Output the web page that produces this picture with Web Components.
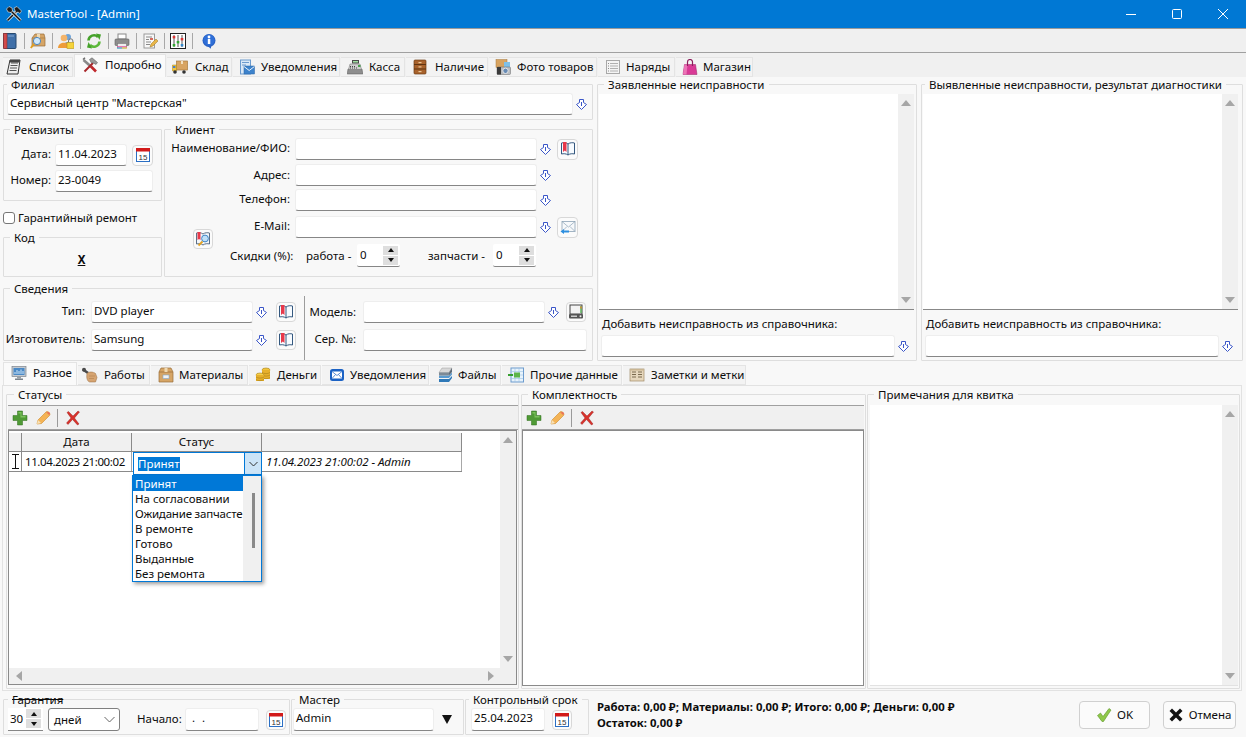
<!DOCTYPE html>
<html lang="ru"><head><meta charset="utf-8"><title>MasterTool</title>
<style>
html,body{margin:0;padding:0;background:#f8f8f8;overflow:hidden}
body{font:11.5px/14px "Noto Sans","Open Sans",sans-serif;color:#0c0c0c;width:1246px;height:737px}
</style></head><body>
<master-window></master-window>
<script>
const def=(tag,html,init)=>{const t=document.createElement('template');t.innerHTML=html;
customElements.define(tag,class extends HTMLElement{constructor(){super();this.attachShadow({mode:'open'}).append(t.content.cloneNode(true));}
connectedCallback(){init&&init(this,this.shadowRoot)}})};

const I={
appicon:'<path d="M1.500 14.500 11 5" stroke="#f4f4f4" stroke-width="3"/><path d="M1.500 14.500 11 5" stroke="#111" stroke-width="1.600"/><path d="M8 2l3-1.500 4.500 4.500-1.500 2.500-2-1.500-2 1z" fill="#1c1c1c" stroke="#eee" stroke-width=".6"/><path d="M14.500 14.500 5 5" stroke="#f4f4f4" stroke-width="3"/><path d="M14.500 14.500 5 5" stroke="#111" stroke-width="1.600"/><path d="M.5 3l2.500-2.500 3 1.500.5 3-1.500 1.500-3-.5z" fill="#1c1c1c" stroke="#eee" stroke-width=".6"/>',
book:'<rect x="1.500" y="0.500" width="12.500" height="15" rx="1" fill="#3f6fa8" stroke="#27496f"/><rect x="1.500" y="0.500" width="3.500" height="15" fill="#d24a4a" stroke="#8c2c2c" stroke-width=".6"/><path d="M6 3h6" stroke="#86a9d0"/>',
boxsearch:'<path d="M2 5 5 1h9l1 4v8H2z" fill="#d6a566" stroke="#9a6f3b" stroke-width=".7"/><path d="M8 1v4M2 5h13" stroke="#a87b44" stroke-width=".7"/><rect x="7" y="1" width="3" height="4" fill="#efd9b2"/><circle cx="7" cy="8" r="3.600" fill="#cfe8fb" stroke="#4a86c0"/><path d="M4 11 .8 15" stroke="#e0a020" stroke-width="2"/>',
users:'<circle cx="10" cy="4" r="3" fill="#6ea3d8"/><path d="M5 13c0-5 10-5 10 0z" fill="#4a7fb8"/><circle cx="6" cy="5" r="3.300" fill="#f5b56a"/><path d="M0 15c0-7 12-7 12 0z" fill="#ee9c3a"/><path d="M10.500 9.500V8a2.200 2.200 0 0 1 4.400 0v1.500" fill="none" stroke="#777"/><rect x="9" y="9.500" width="7" height="6" fill="#f5d33a" stroke="#b8931a" stroke-width=".6"/>',
refresh:'<path d="M2.500 7.500A5.500 5.500 0 0 1 12 4" fill="none" stroke="#45a22a" stroke-width="2.600"/><path d="M10 0.500l5 1-1.500 5.500z" fill="#45a22a"/><path d="M13.500 8.500A5.500 5.500 0 0 1 4 12" fill="none" stroke="#5cb83a" stroke-width="2.600"/><path d="M6 15.500l-5-1 1.500-5.500z" fill="#45a22a"/>',
printer:'<rect x="4" y="1" width="8" height="5" fill="#fff" stroke="#888"/><rect x="1" y="6" width="14" height="6.500" rx="1" fill="#8d8d8d" stroke="#5e5e5e" stroke-width=".6"/><rect x="3.500" y="10.500" width="9" height="4.500" fill="#eee" stroke="#777" stroke-width=".6"/><path d="M3 13.800h10" stroke="#e04b9c"/><path d="M3 15h5" stroke="#3aa6d8"/><path d="M8 15h5" stroke="#e2c93c"/>',
docpen:'<rect x="2" y="1" width="10.500" height="14" fill="#f8f8f8" stroke="#9a9a9a"/><path d="M4 4h6M4 6.500h3M4 9h5M4 11.500h4" stroke="#888"/><rect x="8" y="5" width="3" height="2" fill="#d86a5e"/><path d="M8 14l1-3 5-5 2 2-5 5z" fill="#e8b648" stroke="#9c7420" stroke-width=".5"/>',
eq:'<rect x=".5" y=".5" width="15" height="15" fill="#fff" stroke="#222"/><path d="M4 2v12M8 2v12M12 2v12" stroke="#555"/><rect x="2.700" y="3" width="2.600" height="2.400" fill="#d33"/><rect x="6.700" y="8" width="2.600" height="2.400" fill="#3a3"/><rect x="10.700" y="5" width="2.600" height="2.400" fill="#d33"/><rect x="2.700" y="11" width="2.600" height="2.400" fill="#3a3"/><rect x="10.700" y="11" width="2.600" height="2.400" fill="#38c"/>',
info:'<path d="M5 12 10 15.800V12z" fill="#2a62c4"/><circle cx="8" cy="7.500" r="6.500" fill="#2a62c4"/><circle cx="8" cy="7" r="5.500" fill="#2f6fd8"/><rect x="6.800" y="6" width="2.500" height="5" fill="#fff"/><circle cx="8" cy="4" r="1.400" fill="#fff"/>',
notepad:'<path d="M4 1h10l-2 14H1z" fill="#eee" stroke="#333"/><path d="M5 4h7M4.500 6.500h7M4 9h7M3.500 11.500h7" stroke="#555"/><path d="M4 1h10l-.4 2.500H3.500z" fill="#444"/>',
hammer:'<path d="M1.500 3 9.500 10" stroke="#8a8a8a" stroke-width="2.600"/><path d="M1 2.500 3 .8" stroke="#666" stroke-width="1.500"/><path d="M9 9.500 14 14.500" stroke="#c0282c" stroke-width="2.600"/><path d="M2.500 14.500 11 6" stroke="#a8262a" stroke-width="2"/><path d="M7.500 2.500 10 .8l5.500 4.700-1.500 2-2.200-1.300-2.500-.4z" fill="#9a9a9a" stroke="#555" stroke-width=".5"/>',
truck:'<rect x="4.500" y="2" width="11" height="9" fill="#d8a461" stroke="#a77a3e" stroke-width=".7"/><path d="M10 2v3" stroke="#f2e0c0" stroke-width="2"/><path d="M.5 6h4v6h-4z" fill="#f3c53a" stroke="#a88418" stroke-width=".5"/><rect x="1" y="7" width="2.400" height="2" fill="#4a7ec2"/><circle cx="3" cy="13" r="1.800" fill="#333"/><circle cx="12" cy="13" r="1.800" fill="#333"/>',
maildoc:'<rect x="1.500" y="1" width="10" height="14" fill="#dbe9f7" stroke="#6c9bce"/><path d="M3 3.500h7M3 6h4" stroke="#6c9bce"/><rect x="5" y="7" width="10.500" height="8" fill="#3d83cc" stroke="#2a63a4" stroke-width=".5"/><path d="M5 7.500l5.200 4 5.200-4" fill="none" stroke="#fff" stroke-width=".9"/>',
register:'<path d="M1 10h14l.8 5H.2z" fill="#8e8e8e" stroke="#555" stroke-width=".5"/><path d="M3 5h10l1.500 5.500H1.500z" fill="#cfcfcf" stroke="#6e6e6e" stroke-width=".5"/><path d="M3 7.500h6M3 9h7" stroke="#444" stroke-dasharray="1 1"/><rect x="5" y="1" width="7" height="3.500" fill="#4a4a4a"/><rect x="6" y="2" width="5" height="1.500" fill="#9fe0a0"/><rect x="11" y="6" width="2.500" height="2" fill="#45a04a"/>',
drawer:'<rect x="2" y="1" width="12" height="14" rx="1" fill="#a8622c" stroke="#6e3c14" stroke-width=".7"/><path d="M2 5.500h12M2 10h12" stroke="#5f3410"/><rect x="6.500" y="3" width="3" height="1.200" fill="#e9c89a"/><rect x="6.500" y="7.300" width="3" height="1.200" fill="#e9c89a"/><rect x="6.500" y="12" width="3" height="1.200" fill="#e9c89a"/>',
photo:'<rect x="1" y="0.500" width="11" height="8" fill="#d8a461" stroke="#a77a3e" stroke-width=".5"/><rect x="9" y="3" width="6" height="5" fill="#7fc0e8"/><rect x="2" y="8" width="13.500" height="7.500" rx="1" fill="#b9bcc0" stroke="#666" stroke-width=".5"/><rect x="2" y="8" width="4" height="7.500" fill="#3b3b3b"/><circle cx="10.500" cy="11.800" r="2.700" fill="#678bb5" stroke="#e8e8e8"/>',
listgrey:'<rect x="1.500" y="1.500" width="13" height="13" fill="#f4f4f4" stroke="#a8a8a8"/><path d="M5 4.500h8M5 7h8M5 9.500h8M5 12h8" stroke="#b0b0b0"/><path d="M3 4.500h1M3 7h1M3 9.500h1M3 12h1" stroke="#8a8a8a"/>',
bag:'<path d="M2.500 5.500h11l1.500 10H1z" fill="#d93a96" stroke="#9a1f66" stroke-width=".5"/><path d="M2.500 5.500h3L4.500 15.500H1z" fill="#ec74b7"/><path d="M5.500 7V3a2.500 2.500 0 0 1 5 0v4" fill="none" stroke="#8c1e5c" stroke-width="1.200"/>',
monitor:'<rect x="1" y="1.500" width="14" height="10" fill="#c3c9d0" stroke="#7b838c" stroke-width=".7"/><rect x="2.500" y="3" width="11" height="7" fill="#4a89c6"/><path d="M4 9V7M6 9V5M8 9V6M10 9V4.500M12 9V6" stroke="#cfe6f8"/><rect x="6" y="11.500" width="4" height="2" fill="#9aa1a8"/><rect x="4" y="13.500" width="8" height="1.500" fill="#7b838c"/>',
wrenchhand:'<path d="M1 2.500 6 6" stroke="#4a4a4a" stroke-width="2.600"/><circle cx="2" cy="2.800" r="2" fill="#4a4a4a"/><path d="M5 6.500c2-2 6-2 8.500 0l1.500 4-1.500 4.500H8c-2 0-4-3-3-8.500z" fill="#d6a471" stroke="#976b3e" stroke-width=".5"/><path d="M7 9h6M7 11.500h5" stroke="#b3824e" stroke-width=".6"/>',
box:'<path d="M1 5 3 1h10l2 4v10H1z" fill="#d6a566" stroke="#9a6f3b" stroke-width=".7"/><path d="M1 5h14" stroke="#a87b44"/><rect x="6.500" y="1" width="3" height="4" fill="#efd9b2"/><rect x="5" y="8" width="6" height="3.500" fill="#f2f2f2" stroke="#7ea8d2" stroke-width=".6"/>',
coins:'<ellipse cx="11" cy="3" rx="4" ry="2" fill="#f3c53a" stroke="#a77f16" stroke-width=".6"/><rect x="7" y="3" width="8" height="9" fill="#e7b02c"/><path d="M7 5.500c2 1.500 6 1.500 8 0M7 8c2 1.500 6 1.500 8 0M7 10.500c2 1.500 6 1.500 8 0" fill="none" stroke="#a77f16" stroke-width=".6"/><ellipse cx="5" cy="8" rx="4" ry="2" fill="#f6d04a" stroke="#a77f16" stroke-width=".6"/><rect x="1" y="8" width="8" height="6" fill="#e7b02c"/><path d="M1 10c2 1.500 6 1.500 8 0M1 12.500c2 1.500 6 1.500 8 0" fill="none" stroke="#a77f16" stroke-width=".6"/>',
mailblue:'<rect x="1" y="2" width="14" height="12" rx="2.500" fill="#1b62c4"/><rect x="3" y="4.500" width="10" height="7" fill="#fff"/><path d="M3 4.500l5 4 5-4M3 11.500l3.500-4M13 11.500l-3.500-4" fill="none" stroke="#1b62c4" stroke-width=".7"/>',
files:'<path d="M2 12h10l3-3v2l-3 4H2z" fill="#2f79b8"/><path d="M2 8.500h10l3-3v2l-3 3.500H2z" fill="#5a9bd0"/><path d="M5 1h10l-3 4.500H2z" fill="#d8d8d8" stroke="#888" stroke-width=".4"/><path d="M2 5.500h10v3H2z" fill="#7d8a96"/><path d="M12 5.500l3-4.500v4l-3 3.500z" fill="#5d6a76"/>',
tablegreen:'<rect x="3" y="1" width="12.500" height="14" fill="#e8f3fb" stroke="#6c9bce"/><path d="M3 4.500h12M3 8h12M3 11.500h12M7 1v14M11 1v14" stroke="#9cc2e4" stroke-width=".6"/><rect x="6" y="5.500" width="6" height="5" fill="#5db54a"/><path d="M0 8h5" stroke="#36a030" stroke-width="2"/>',
notes:'<rect x="1" y="2" width="14" height="12" fill="#e6d7bd" stroke="#a08a66" stroke-width=".7"/><path d="M3 5h4M9 5h4M3 7.500h4M9 7.500h4M3 10h4M9 10h4" stroke="#7a6a4e"/><rect x="1" y="2" width="14" height="1.500" fill="#c9b592"/>',
plus:'<path d="M5.500 1h5v4.500H15v5h-4.500V15h-5v-4.500H1v-5h4.500z" fill="#4f9a35" stroke="#2f6e1d" stroke-width=".5"/><path d="M6.500 2h3v4h4v1.500h-5v-4h-2z" fill="#7cc25d"/>',
pencil:'<path d="M2 14l1-4 8-8c1-1 2.500 0 3 .5s1.500 2 .5 3l-8 8z" fill="#f4b456" stroke="#cf8a28" stroke-width=".6"/><path d="M11 2l3 3 .8-.8c1-1-1-3-2-2z" fill="#e9735a"/><path d="M2 14l1-4 3 3z" fill="#f7e1b8"/>',
cross:'<path d="M2 2.500 3.500 1.500 8 6 13 1l1.500 1L9.500 8l4.500 6-1.500 1L7.500 9.500 3 14.500 1.500 13 6 8z" fill="#d8322c" stroke="#8f1713" stroke-width=".4"/>',
check:'<path d="M1.500 8.500 4.500 6 7 9.500 13 1.500 15 3 7.500 14.500h-1.500z" fill="#8fc84a" stroke="#5e9528" stroke-width=".6"/>',
xblack:'<path d="M1.500 4 4 1.500 8 5.500 12 1.500 14.500 4 10.500 8l4 4-2.500 2.500-4-4-4 4L1.500 12l4-4z" fill="#111"/>',
calendar:'<rect x="1.500" y="1.500" width="13" height="13" fill="#fff" stroke="#2b6fc4"/><rect x="1" y="1" width="14" height="3.500" fill="#d21a1a"/><text x="8" y="12.600" text-anchor="middle" font-size="8" font-family="Liberation Sans,sans-serif" fill="#333">15</text>',
bookopen:'<path d="M8 3C6 1.500 3.500 1.500 1.500 2v11c2-.5 4.500-.5 6.500 1 2-1.500 4.500-1.500 6.500-1V2C12.500 1.500 10 1.500 8 3z" fill="#f7fbff" stroke="#34587f"/><path d="M8 3v11" stroke="#34587f"/><path d="M3 1h3.500v10L4.800 9.500 3 11z" fill="#e8384a"/>',
bookmag:'<path d="M8 3C6 1.500 3.500 1.500 1.500 2v11c2-.5 4.500-.5 6.500 1 2-1.500 4.500-1.500 6.500-1V2C12.500 1.500 10 1.500 8 3z" fill="#f3f6fa" stroke="#5c6f86"/><path d="M2.500 1h3v8l-1.500-1-1.500 1z" fill="#e8384a"/><circle cx="10" cy="7.500" r="3.400" fill="#bfe0f8" stroke="#3f85c6"/><path d="M7.500 10.500 3.500 14.500" stroke="#e2a122" stroke-width="1.800"/>',
mailback:'<rect x="2" y="2.500" width="13" height="10" fill="#f7f9fb" stroke="#8da3b6" stroke-width=".8"/><path d="M2 2.500l6.500 5.500 6.500-5.500M2 12.500l5-5M15 12.500l-5-5" fill="none" stroke="#8da3b6" stroke-width=".7"/><path d="M.5 12.500 4 10v1.500h5V13.500H4V15z" fill="#2d8fe0"/>',
disk:'<rect x="2" y="1" width="12" height="9" fill="#f3f3f3" stroke="#444"/><path d="M13 2v7" stroke="#5ab05a" stroke-width="1.500"/><path d="M13 2.500v2" stroke="#e0842a" stroke-width="1.500"/><rect x="1" y="10" width="14" height="4.500" rx="1" fill="#555"/><rect x="3" y="11.500" width="6" height="1.500" fill="#ccc"/><circle cx="12.500" cy="12.300" r="1" fill="#eee"/>'
};
def('app-icon','<style>:host{display:inline-flex;width:16px;height:16px;flex:none}svg{width:100%;height:100%;display:block}</style><svg viewBox="0 0 16 16"></svg>',(h,s)=>{s.querySelector('svg').innerHTML=I[h.getAttribute('n')]||''});

def('drop-arrow','<style>:host{display:flex;flex:none;width:16px;justify-content:center;align-items:center}svg{width:11px;height:11px;display:block}</style><svg viewBox="0 0 11 11"><path d="M3.500.5h4v3L10.500 5.500 5.500 10.500.5 5.500 3.500 3.500z" fill="#fff" stroke="#3a56c8"/><path d="M5.500 3v4" stroke="#3a56c8"/></svg>');

def('icon-btn','<style>:host{display:flex;flex:none;width:20px;height:20px;box-sizing:border-box;border:1px solid #d8d8d8;border-radius:4px;background:#fbfbfb;align-items:center;justify-content:center}</style><slot></slot>');

def('text-field','<style>:host{display:block;flex:none;height:22px;box-sizing:border-box;background:#fff;border:1px solid #eeeeee;border-bottom:1px solid #868686;border-radius:3px;padding:0 2px;line-height:18px;white-space:nowrap;overflow:hidden}</style><slot></slot>');

def('spin-box',`<style>:host{display:flex;flex:none;height:23px;box-sizing:border-box;background:#fff;border-bottom:1px solid #868686;border-radius:2px;line-height:20px;padding:0 2px 0 3px;justify-content:space-between;align-items:center}
.b{display:flex;flex-direction:column;gap:1px}.b i{display:flex;width:15px;height:9px;background:#dedede;align-items:center;justify-content:center}
.u{width:0;height:0;border:3px solid transparent;border-top:0;border-bottom:4px solid #111}.d{width:0;height:0;border:3px solid transparent;border-bottom:0;border-top:4px solid #111}
</style><span><slot></slot></span><div class="b"><i><span class="u"></span></i><i><span class="d"></span></i></div>`);

def('group-box',`<style>:host{display:block;flex:none;box-sizing:border-box}
fieldset{margin:0;padding:0;border:1px solid #dedede;border-radius:1px;box-sizing:border-box;width:100%;height:100%;min-width:0}
legend{margin-left:var(--lm,6px);padding:0 4px;line-height:15px;height:14px;white-space:nowrap}
:host([strike]) legend{text-decoration:line-through;padding:0 1px 0 4px}
.c{padding:var(--pad,0)}
</style><fieldset><legend></legend><div class="c"><slot></slot></div></fieldset>`,(h,s)=>{s.querySelector('legend').textContent=h.getAttribute('legend')});

def('tab-item',`<style>:host{display:flex;flex:none;align-items:center;height:20px;box-sizing:border-box;background:#f3f3f3;border:solid #e4e4e4;border-width:1px 1px 1px 0;padding-left:var(--i);white-space:nowrap;margin-top:auto}
:host([active]){height:23px;background:#fafafa;border-bottom:0;border-left:1px solid #e4e4e4;padding-bottom:2px}
app-icon{margin-right:calc(var(--t) - var(--i) - 16px)}</style><app-icon></app-icon><slot></slot>`,(h,s)=>{const a=s.querySelector('app-icon');a.setAttribute('n',h.getAttribute('ic'));a.shadowRoot.querySelector('svg').innerHTML=I[h.getAttribute('ic')]});

def('title-bar',`<style>:host{display:flex;height:28px;background:#0078d4;color:#fff;align-items:center;padding-left:6px}
span{margin-left:5px;flex:1}.w{display:flex;height:28px}.w div{width:46px;display:flex;align-items:center;justify-content:center}svg{width:10px;height:10px;stroke:#fff;fill:none}
</style><app-icon n="appicon"></app-icon><span>MasterTool - [Admin]</span><div class="w"><div><svg viewBox="0 0 10 10"><path d="M0 5.500h10"/></svg></div><div><svg viewBox="0 0 10 10"><rect x=".5" y=".5" width="9" height="9" rx="1"/></svg></div><div><svg viewBox="0 0 10 10"><path d="M0 0l10 10M10 0 0 10"/></svg></div></div>`);

def('main-toolbar',`<style>:host{display:flex;height:25px;box-sizing:border-box;background:#f0f0f0;border-top:1px solid #9a9a9a;border-bottom:1px solid #a0a0a0;align-items:center;padding-left:2px}
app-icon{margin-right:6px}s{display:block;flex:none;width:1px;height:16px;background:#a8a8a8;margin-right:5px}
</style><app-icon n="book"></app-icon><s></s><app-icon n="boxsearch"></app-icon><s></s><app-icon n="users"></app-icon><s></s><app-icon n="refresh"></app-icon><s></s><app-icon n="printer"></app-icon><s></s><app-icon n="docpen"></app-icon><s></s><app-icon n="eq"></app-icon><s></s><app-icon n="info" style="margin-left:3px"></app-icon>`);

def('tab-strip',`<style>:host{display:flex;height:24px;box-sizing:border-box;background:var(--bg,#f0f0f0);padding-left:3px;gap:1px;align-items:flex-start}
</style><slot></slot>`);

const F=`.row{display:flex;align-items:center}.lab{text-align:right;white-space:nowrap;flex:none;margin-bottom:2px}`;

def('client-card',`<style>:host{display:block}${F}
.row{height:22px}.lab{width:130px;padding-right:5px;box-sizing:border-box}.row text-field{width:242px}
.btn{margin:0 0 0 4px;width:21px;height:21px}
.dsc{display:flex;align-items:center;height:23px;margin-top:6px}
.r1{margin-top:2px}.r2{margin-top:4px}.r3{margin-top:3px}.r4{margin-top:5px}
.s{margin-left:65px;width:76px;white-space:nowrap}.w{width:51px;white-space:nowrap}.z{margin-left:28px;width:65px;white-space:nowrap}
</style>
<div class="row r1"><div class="lab">Наименование/ФИО:</div><text-field></text-field><drop-arrow></drop-arrow><icon-btn class="btn"><app-icon n="bookopen"></app-icon></icon-btn></div>
<div class="row r2"><div class="lab" style="margin-bottom:0">Адрес:</div><text-field></text-field><drop-arrow></drop-arrow></div>
<div class="row r3"><div class="lab">Телефон:</div><text-field></text-field><drop-arrow></drop-arrow></div>
<div class="row r4"><div class="lab">E-Mail:</div><text-field></text-field><drop-arrow></drop-arrow><icon-btn class="btn"><app-icon n="mailback"></app-icon></icon-btn></div>
<div class="dsc"><span class="s">Скидки (%):</span><span class="w">работа -</span><spin-box style="width:43px">0</spin-box><span class="z">запчасти -</span><spin-box style="width:43px">0</spin-box></div>
<icon-btn style="position:absolute;left:29px;top:107px"><app-icon n="bookmag"></app-icon></icon-btn>`);

def('device-card',`<style>:host{display:flex}${F}
.l{display:flex;flex-direction:column;gap:6px;padding:6px 0 0 0;width:300px;flex:none}
.r{display:flex;flex-direction:column;gap:6px;padding-top:6px;border-left:1px solid #9c9c9c;height:58px;margin-top:1px}
.row{height:22px}
</style><div class="l">
<div class="row"><div class="lab" style="width:81px">Тип:</div><text-field style="width:162px;margin-left:6px">DVD player</text-field><drop-arrow></drop-arrow><icon-btn style="margin-left:7px"><app-icon n="bookopen"></app-icon></icon-btn></div>
<div class="row"><div class="lab" style="width:81px">Изготовитель:</div><text-field style="width:162px;margin-left:6px">Samsung</text-field><drop-arrow></drop-arrow><icon-btn style="margin-left:7px"><app-icon n="bookopen"></app-icon></icon-btn></div>
</div><div class="r">
<div class="row" style="margin-top:-1px"><div class="lab" style="width:51px;margin-bottom:0">Модель:</div><text-field style="width:182px;margin-left:7px"></text-field><drop-arrow></drop-arrow><icon-btn style="margin-left:5px"><app-icon n="disk"></app-icon></icon-btn></div>
<div class="row"><div class="lab" style="width:51px">Сер. №:</div><text-field style="width:224px;margin-left:7px"></text-field></div>
</div>`);

def('scroll-v',`<style>:host{display:flex;flex-direction:column;justify-content:space-between;align-items:center;flex:none;width:16px;background:#f0f0f0;padding:6px 0;box-sizing:border-box}
.u{border:5px solid transparent;border-top:0;border-bottom:6px solid #a6a6a6}.d{border:5px solid transparent;border-bottom:0;border-top:6px solid #a6a6a6}</style><span class="u"></span><span class="d"></span>`);
def('scroll-h',`<style>:host{display:flex;justify-content:space-between;align-items:center;height:16px;background:#f0f0f0;padding:0 6px 0 7px;box-sizing:border-box}
.l{border:5px solid transparent;border-left:0;border-right:6px solid #a6a6a6}.r{border:5px solid transparent;border-right:0;border-left:6px solid #a6a6a6}</style><span class="l"></span><span class="r"></span>`);

def('defect-box',`<style>:host{display:block}${F}
.ta{display:flex;justify-content:flex-end;width:315px;height:215px;background:#fff;border-bottom:1px solid #888;margin:3px 0 0 1px}
.lb{margin:7px 0 4px 4px;white-space:nowrap;line-height:14px}
.row{margin-left:3px}
</style><div class="ta"><scroll-v></scroll-v></div><div class="lb">Добавить неисправность из справочника:</div><div class="row"><text-field style="width:294px"></text-field><drop-arrow></drop-arrow></div>`);

def('mini-toolbar',`<style>:host{display:flex;height:25px;box-sizing:border-box;background:#f0f0f0;border-top:1px solid #a0a0a0;border-bottom:1px solid #a0a0a0;align-items:center;padding-left:4px}
s{display:block;width:1px;height:18px;background:#9a9a9a;margin:0 7px 0 6px}app-icon{margin-right:7px}.p{margin-right:0}</style>
<app-icon n="plus"></app-icon><app-icon class="p" n="pencil"></app-icon><s></s><app-icon n="cross" style="margin-right:0"></app-icon>`);

def('status-grid',`<style>:host{display:grid;grid-template-columns:1fr 16px;grid-template-rows:1fr 16px;height:255px;box-sizing:border-box;border:1px solid #8a8a8a;background:#fff;position:relative}
.t{padding-top:2px;position:relative}.h,.d{display:grid;grid-template-columns:13px 110px 130px 200px;width:453px}
.h{height:19px;box-sizing:border-box;background:#f0f0f0;border-bottom:1px solid #8a8a8a}.h div{border-right:1px solid #8a8a8a;text-align:center;line-height:18px}
.d{height:20px;box-sizing:border-box;border-bottom:1px solid #8a8a8a;line-height:19px}.d div{border-right:1px solid #a8a8a8;white-space:nowrap;overflow:visible}
.d .n{display:flex;align-items:center;justify-content:center;border-right:1px solid #8a8a8a}
.dt{padding-left:3px;letter-spacing:-.4px}.c{position:relative;border-right:0!important}
.ed{position:absolute;left:1px;top:0;width:129px;height:23px;box-sizing:border-box;border:1px solid #0078d7;background:#fff;display:flex;align-items:center;padding-left:4px;border-right:1px solid #0078d7!important}
.ed b{font-weight:400;background:#0078d7;color:#fff;line-height:14px}
.ed i{position:absolute;right:0;top:0;bottom:0;width:16px;background:#cce4f7;border-left:1px solid #0078d7;display:flex;align-items:center;justify-content:center}
.dd{position:absolute;left:0;top:23px;width:130px;height:107px;box-sizing:border-box;border:1px solid #0078d7!important;background:#fff;box-shadow:2px 2px 4px rgba(0,0,0,.4);display:flex;overflow:hidden!important;z-index:2}
.ls{width:110px;overflow:hidden!important;flex:none;border:0!important}.ls div{height:15px;line-height:15px;padding-left:2px;border:0;white-space:nowrap;color:#0c0c0c;font-style:normal}
.ls .on{background:#0078d7;color:#fff}
.bar{flex:1;background:#f0f0f0;position:relative;display:flex;justify-content:center;padding-top:17px;border:0!important}.bar span{display:block;width:3px;height:55px;background:#8a8a8a;margin-left:2px}
.it{font-style:italic;padding-left:4px;letter-spacing:-.05px}
scroll-h{grid-column:1}.cn{grid-column:2;background:#f0f0f0}
</style><div class="t"><div class="h"><div></div><div>Дата</div><div>Статус</div><div></div></div>
<div class="d"><div class="n"><svg width="7" height="15" viewBox="0 0 7 15"><path d="M0 .5h7M0 14.500h7M3.500 0v15" stroke="#111" fill="none"/></svg></div><div class="dt">11.04.2023 21:00:02</div>
<div class="c"><div class="ed"><b>Принят</b><i><svg width="9" height="6" viewBox="0 0 9 6"><path d="M.5 1 4.500 5 8.500 1" fill="none" stroke="#333"/></svg></i></div>
<div class="dd"><div class="ls"><div class="on">Принят</div><div>На согласовании</div><div style="letter-spacing:-.2px;padding-left:2px">Ожидание запчасте</div><div>В ремонте</div><div>Готово</div><div>Выданные</div><div>Без ремонта</div></div><div class="bar"><span></span></div></div></div>
<div class="it">11.04.2023 21:00:02 - Admin</div></div></div><scroll-v></scroll-v><scroll-h></scroll-h><div class="cn"></div>`);

def('detail-panel',`<style>:host{display:flex;height:306px;box-sizing:border-box;margin-left:2px;width:1240px;border:1px solid #e2e2e2;padding:1px 0 0 3px;gap:0}
.w{width:342px;height:256px;background:#fff;box-sizing:border-box;border:1px solid #8a8a8a}
.ta{display:flex;justify-content:flex-end;background:#fff;height:280px;border-bottom:1px solid #e2e2e2;margin:4px 1px 0 2px}
</style>
<group-box legend="Статусы" style="width:513px;height:302px;--lm:7px;--pad:4px 0 0 1px"><mini-toolbar style="width:510px"></mini-toolbar><status-grid style="width:509px"></status-grid></group-box>
<group-box legend="Комплектность" style="width:345px;height:302px;margin-left:2px;--lm:6px;--pad:4px 0 0 0"><mini-toolbar style="width:342px"></mini-toolbar><div class="w"></div></group-box>
<group-box legend="Примечания для квитка" style="width:373px;height:302px;margin-left:1px"><div class="ta"><scroll-v></scroll-v></div></group-box>`);

def('order-top',`<style>:host{display:flex;height:284px;padding-left:3px;gap:4px}${F}
.left{width:590px;flex:none;display:flex;flex-direction:column}
.two{display:flex;margin-top:2px;gap:1px}
.sub{width:160px;flex:none}
.ck{display:flex;align-items:center;height:12px;margin:11px 0 6px 0;gap:3px;white-space:nowrap}
.ck i{display:block;width:12px;height:12px;box-sizing:border-box;border:1px solid #767676;border-radius:3px;background:#fff}
.rq{display:grid;grid-template-columns:47px 72px 21px;gap:4px;padding:8px 0 0 0;align-items:center;column-gap:4px}
.x{display:block;text-align:center;font-weight:700;text-decoration:underline;margin-top:9px;margin-right:2px}
</style><div class="left">
<group-box legend="Филиал" style="height:43px;--lm:3px;--pad:2px 0 0 3px"><div class="row"><text-field style="width:566px">Сервисный центр "Мастерская"</text-field><drop-arrow></drop-arrow></div></group-box>
<div class="two"><div class="sub">
<group-box legend="Реквизиты" style="height:79px;width:159px"><div class="rq"><div class="lab" style="margin-bottom:3px">Дата:</div><text-field style="width:72px">11.04.2023</text-field><icon-btn style="width:21px;height:21px;margin-left:1px"><app-icon n="calendar"></app-icon></icon-btn><div class="lab">Номер:</div><text-field style="width:98px;grid-column:2/4">23-0049</text-field></div></group-box>
<div class="ck"><i></i><span>Гарантийный ремонт</span></div>
<group-box legend="Код" style="height:47px;width:159px"><span class="x">X</span></group-box>
</div><group-box legend="Клиент" style="width:429px;height:155px;position:relative"><client-card></client-card></group-box></div>
<group-box legend="Сведения" style="height:80px;margin-top:4px"><device-card></device-card></group-box>
</div>
<group-box legend="Заявленные неисправности" style="width:320px;height:284px"><defect-box></defect-box></group-box>
<group-box legend="Выявленные неисправности, результат диагностики" style="width:322px;height:284px;--lm:3px"><defect-box></defect-box></group-box>`);

def('footer-bar',`<style>:host{display:flex;height:46px;box-sizing:border-box;padding:1px 0 0 3px}${F}
.row{height:25px;align-items:flex-start}
.num{width:35px;height:23px;background:#fff;border-bottom:1px solid #868686;box-sizing:border-box;display:flex;justify-content:space-between;align-items:center;padding:0 2px 0 2px;margin-left:4px;flex:none}
.sp{display:flex;flex-direction:column;gap:0}.sp i{display:flex;width:15px;height:9px;background:#dedede;align-items:center;justify-content:center;margin-bottom:1px}
.u{width:0;height:0;border:3px solid transparent;border-top:0;border-bottom:4px solid #111}.d{width:0;height:0;border:3px solid transparent;border-bottom:0;border-top:4px solid #111}
.sel{width:72px;height:23px;flex:none;box-sizing:border-box;border:1px solid #808080;border-radius:3px;background:#fff;margin-left:5px;display:flex;align-items:center;justify-content:space-between;padding:0 4px 0 5px}
.tot{flex:1;font-weight:700;margin:7px 0 0 8px;line-height:16px;font-size:11.35px;white-space:nowrap}
.b{display:flex;align-items:center;justify-content:center;gap:5px;height:28px;box-sizing:border-box;border:1px solid #d0d0d0;border-radius:4px;background:#fbfbfb;margin-top:9px;flex:none}
.ic{margin-top:2px}
</style>
<group-box legend="Гарантия" strike style="width:287px;height:43px;--lm:4px;--pad:2px 0 0 0"><div class="row"><div class="num"><span>30</span><div class="sp"><i><span class="u"></span></i><i><span class="d"></span></i></div></div><div class="sel"><span>дней</span><svg width="11" height="7" viewBox="0 0 11 7"><path d="M.5 1 5.500 6l5-5" fill="none" stroke="#666"/></svg></div><span style="margin:4px 0 0 17px;width:48px;flex:none">Начало:</span><text-field style="width:74px;height:23px;padding-left:6px;word-spacing:4px">. .</text-field><icon-btn class="ic" style="margin-left:7px"><app-icon n="calendar"></app-icon></icon-btn></div></group-box>
<group-box legend="Мастер" style="width:173px;height:43px;margin-left:1px;--lm:3px;--pad:2px 0 0 1px"><div class="row"><text-field style="width:141px;height:23px">Admin</text-field><svg style="margin:7px 0 0 8px" width="10" height="9" viewBox="0 0 10 9"><path d="M0 0h10L5 9z" fill="#111"/></svg></div></group-box>
<group-box legend="Контрольный срок" style="width:124px;height:43px;margin-left:1px;--lm:3px;--pad:2px 0 0 5px"><div class="row"><text-field style="width:74px;height:23px">25.04.2023</text-field><icon-btn class="ic" style="margin-left:7px"><app-icon n="calendar"></app-icon></icon-btn></div></group-box>
<div class="tot">Работа: 0,00 ₽; Материалы: 0,00 ₽; Итого: 0,00 ₽; Деньги: 0,00 ₽<br>Остаток: 0,00 ₽</div>
<div class="b" style="width:71px"><app-icon n="check"></app-icon><span>OK</span></div><div class="b" style="width:73px;margin-left:13px;margin-right:10px"><app-icon n="xblack"></app-icon><span>Отмена</span></div>`);

def('master-window',`<style>:host{display:flex;flex-direction:column;width:1246px;height:737px;background:#f8f8f8;overflow:hidden}</style>
<title-bar></title-bar><main-toolbar></main-toolbar>
<tab-strip>
<tab-item ic="notepad" style="width:70px;--i:3px;--t:26px">Список</tab-item>
<tab-item ic="hammer" active style="width:92px;--i:7px;--t:30px">Подробно</tab-item>
<tab-item ic="truck" style="width:65px;--i:5px;--t:28px">Склад</tab-item>
<tab-item ic="maildoc" style="width:107px;--i:6px;--t:28px">Уведомления</tab-item>
<tab-item ic="register" style="width:64px;--i:6px;--t:28px">Касса</tab-item>
<tab-item ic="drawer" style="width:82px;--i:6px;--t:29px">Наличие</tab-item>
<tab-item ic="photo" style="width:108px;--i:6px;--t:28px">Фото товаров</tab-item>
<tab-item ic="listgrey" style="width:77px;--i:7px;--t:28px">Наряды</tab-item>
<tab-item ic="bag" style="width:77px;--i:6px;--t:27px">Магазин</tab-item>
</tab-strip>
<order-top></order-top>
<tab-strip style="--bg:transparent">
<tab-item ic="monitor" active style="width:74px;--i:7px;--t:29px">Разное</tab-item>
<tab-item ic="wrenchhand" style="width:72px;--i:4px;--t:26px">Работы</tab-item>
<tab-item ic="box" style="width:97px;--i:7px;--t:28px">Материалы</tab-item>
<tab-item ic="coins" style="width:72px;--i:6px;--t:28px">Деньги</tab-item>
<tab-item ic="mailblue" style="width:107px;--i:7px;--t:28px">Уведомления</tab-item>
<tab-item ic="files" style="width:71px;--i:7px;--t:28px">Файлы</tab-item>
<tab-item ic="tablegreen" style="width:120px;--i:6px;--t:28px">Прочие данные</tab-item>
<tab-item ic="notes" style="width:123px;--i:6px;--t:28px">Заметки и метки</tab-item>
</tab-strip>
<detail-panel></detail-panel>
<footer-bar></footer-bar>`);
</script>
</body></html>
